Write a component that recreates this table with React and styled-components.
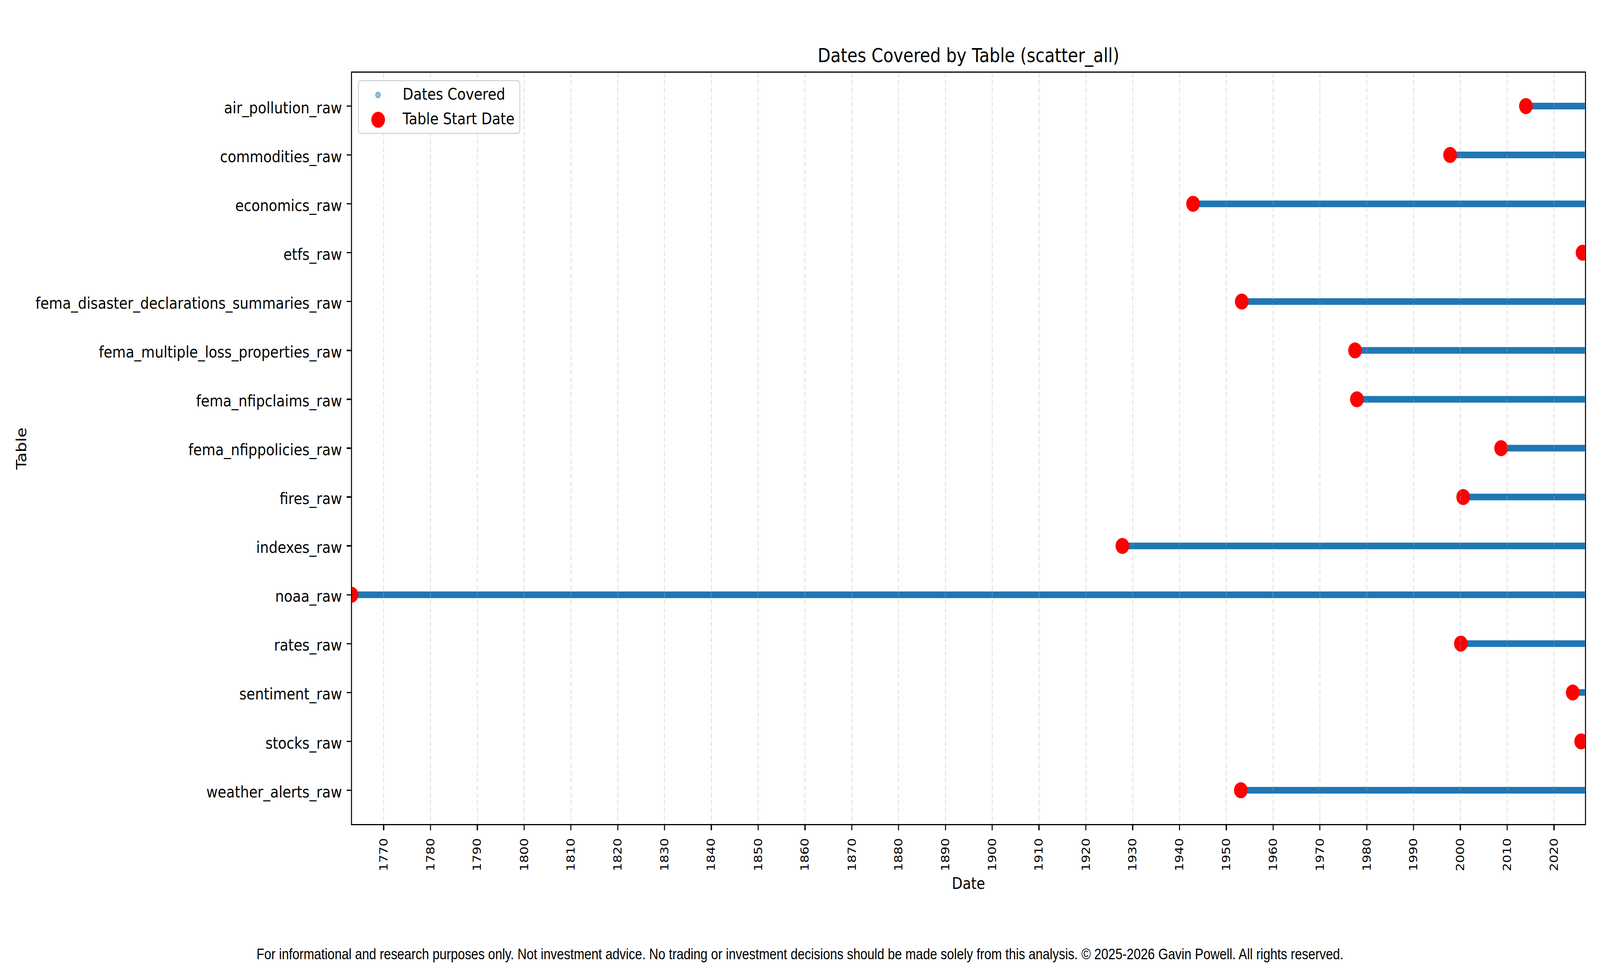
import React, { useEffect, useState } from "react";
import styled, { createGlobalStyle } from "styled-components";

// the figure is laid out on a 4800 x 2480 canvas and stretched to the window
const FIG_W = 4800;
const FIG_H = 2480;

// x scale: px per year measured off the decade ticks
const FIRST_YEAR = 1770;
const PX_PER_YEAR = 14.044;
const FIRST_TICK = 95; // inner plot left -> 1770 tick
const PLOT_W = 3699;
const PLOT_H = 1923;
const ROW0 = 85.5;
const ROW_STEP = 125.07;
const LEFT_EDGE_YEAR = 1763.13;

const tables = [
  { name: "air_pollution_raw", start: 2014.0 },
  { name: "commodities_raw", start: 1997.8 },
  { name: "economics_raw", start: 1942.9 },
  { name: "etfs_raw", start: 2026.1 },
  { name: "fema_disaster_declarations_summaries_raw", start: 1953.3 },
  { name: "fema_multiple_loss_properties_raw", start: 1977.5 },
  { name: "fema_nfipclaims_raw", start: 1977.9 },
  { name: "fema_nfippolicies_raw", start: 2008.7 },
  { name: "fires_raw", start: 2000.6 },
  { name: "indexes_raw", start: 1927.8 },
  { name: "noaa_raw", start: LEFT_EDGE_YEAR },
  { name: "rates_raw", start: 2000.1 },
  { name: "sentiment_raw", start: 2024.0 },
  { name: "stocks_raw", start: 2025.8 },
  { name: "weather_alerts_raw", start: 1953.1 },
];

const decades = Array.from({ length: 26 }, (_, i) => FIRST_YEAR + i * 10);

const xOf = (year) => FIRST_TICK + (year - FIRST_YEAR) * PX_PER_YEAR;
const yOf = (i) => ROW0 + i * ROW_STEP;

const fitScale = () => ({
  x: window.innerWidth / FIG_W,
  y: window.innerHeight / FIG_H,
});

const GlobalStyle = createGlobalStyle`
  html, body {
    margin: 0;
    padding: 0;
    background: #ffffff;
    overflow: hidden;
  }
  body {
    font-family: "DejaVu Sans", sans-serif;
    color: #000;
  }
`;

const Frame = styled.div`
  width: 100vw;
  height: 100vh;
  overflow: hidden;
  background: #ffffff;
`;

const Page = styled.div`
  width: ${FIG_W}px;
  height: ${FIG_H}px;
  display: flex;
  flex-direction: column;
  background: #ffffff;
  transform-origin: 0 0;
`;

const Title = styled.h1`
  margin: 0 0 0 1053px;
  width: 3705px;
  height: 183px;
  box-sizing: border-box;
  padding-top: 117px;
  font: 400 50px/50px "DejaVu Sans", sans-serif;
  text-align: center;
  white-space: nowrap;
`;

const ChartRow = styled.div`
  display: flex;
  height: 1929px;
`;

const YLabelCol = styled.div`
  width: 128px;
  flex: none;
  display: flex;
  align-items: center;
  justify-content: center;
`;

const RotatedText = styled.span`
  writing-mode: vertical-rl;
  transform: rotate(180deg);
  white-space: nowrap;
  font: 400 ${(p) => p.size}px/1 "DejaVu Sans", sans-serif;
`;

const YTicks = styled.div`
  width: 925px;
  flex: none;
  height: 1929px;
  box-sizing: border-box;
  padding: 26px 0 27px;
  display: grid;
  grid-template-columns: minmax(0, 1fr);
  grid-template-rows: repeat(15, 1fr);
`;

const YTickRow = styled.div`
  min-width: 0;
  display: flex;
  align-items: center;
  justify-content: flex-end;
`;

const YTickLabel = styled.span`
  flex: none;
  font: 400 41.67px/1 "DejaVu Sans", sans-serif;
  padding-top: 8px;
  margin-right: 14px;
  white-space: nowrap;
`;

const YTickMark = styled.span`
  flex: none;
  width: 13px;
  height: 3.3px;
  background: #000;
`;

const PlotBox = styled.div`
  position: relative;
  flex: none;
  width: 3705px;
  height: 1929px;
  box-sizing: border-box;
  border: 3.3px solid #000;
  overflow: hidden;
`;

const PlotSvg = styled.svg`
  display: block;
`;

const Legend = styled.div`
  position: absolute;
  left: 18px;
  top: 19px;
  width: 487px;
  height: 138px;
  box-sizing: border-box;
  padding-top: 1px;
  border: 3px solid #d6d6d6;
  border-radius: 9px;
  background: rgba(255, 255, 255, 0.8);
`;

const LegendRow = styled.div`
  display: flex;
  align-items: center;
  height: 63px;
`;

const LegendMarker = styled.span`
  width: 114px;
  display: flex;
  justify-content: center;
  margin-top: 5px;
`;

const Dot = styled.span`
  width: ${(p) => p.size}px;
  height: ${(p) => p.size}px;
  box-sizing: border-box;
  border-radius: 50%;
  background: ${(p) => p.fill};
  border: ${(p) => (p.edge ? `2.5px solid ${p.edge}` : "none")};
`;

const LegendText = styled.span`
  margin-left: 17px;
  font: 400 41.67px/63px "DejaVu Sans", sans-serif;
  white-space: nowrap;
`;

const XTicks = styled.div`
  display: flex;
  margin-left: 1053px;
  padding-left: 27.78px;
  height: 124px;
`;

const XTickCell = styled.div`
  flex: none;
  width: 140.44px;
  display: flex;
  flex-direction: column;
  align-items: center;
`;

const XTickMark = styled.span`
  width: 3.3px;
  height: 13px;
  background: #000;
`;

const XTickLabel = styled(RotatedText)`
  margin-top: 20px;
`;

const XLabel = styled.div`
  margin-left: 1053px;
  width: 3705px;
  height: 50px;
  font: 400 41.67px/50px "DejaVu Sans", sans-serif;
  text-align: center;
`;

const Footer = styled.div`
  margin-top: 135px;
  width: ${FIG_W}px;
  font: 400 38px/42px "Liberation Sans", Arial, sans-serif;
  text-align: center;
  white-space: nowrap;
`;

const Plot = () => (
  <PlotSvg width={PLOT_W} height={PLOT_H} viewBox={`0 0 ${PLOT_W} ${PLOT_H}`}>
    {tables.map((t, i) => (
      <line
        key={t.name}
        x1={xOf(t.start)}
        x2={PLOT_W + 20}
        y1={yOf(i)}
        y2={yOf(i)}
        stroke="#1f77b4"
        strokeWidth="17"
      />
    ))}
    {tables.map((t, i) => (
      <circle key={t.name} cx={xOf(t.start)} cy={yOf(i)} r="20.5" fill="#ff0000" />
    ))}
    {decades.map((y) => (
      <line
        key={y}
        x1={xOf(y)}
        x2={xOf(y)}
        y1="0"
        y2={PLOT_H}
        stroke="#b0b0b0"
        strokeOpacity="0.45"
        strokeWidth="2.2"
        strokeDasharray="13 6"
      />
    ))}
  </PlotSvg>
);

const App = () => {
  const [scale, setScale] = useState(fitScale);

  useEffect(() => {
    const onResize = () => setScale(fitScale());
    window.addEventListener("resize", onResize);
    return () => window.removeEventListener("resize", onResize);
  }, []);

  return (
    <Frame>
      <GlobalStyle />
      <Page style={{ transform: `scale(${scale.x}, ${scale.y})` }}>
        <Title>Dates Covered by Table (scatter_all)</Title>
        <ChartRow>
          <YLabelCol>
            <RotatedText size={41.67}>Table</RotatedText>
          </YLabelCol>
          <YTicks>
            {tables.map((t) => (
              <YTickRow key={t.name}>
                <YTickLabel>{t.name}</YTickLabel>
                <YTickMark />
              </YTickRow>
            ))}
          </YTicks>
          <PlotBox>
            <Plot />
            <Legend>
              <LegendRow>
                <LegendMarker>
                  <Dot size={16} fill="rgba(31,119,180,0.45)" edge="rgba(31,119,180,0.55)" />
                </LegendMarker>
                <LegendText>Dates Covered</LegendText>
              </LegendRow>
              <LegendRow>
                <LegendMarker>
                  <Dot size={41} fill="#ff0000" />
                </LegendMarker>
                <LegendText>Table Start Date</LegendText>
              </LegendRow>
            </Legend>
          </PlotBox>
        </ChartRow>
        <XTicks>
          {decades.map((y) => (
            <XTickCell key={y}>
              <XTickMark />
              <XTickLabel size={33.33}>{y}</XTickLabel>
            </XTickCell>
          ))}
        </XTicks>
        <XLabel>Date</XLabel>
        <Footer>
          For informational and research purposes only. Not investment advice. No trading or
          investment decisions should be made solely from this analysis. © 2025-2026 Gavin Powell.
          All rights reserved.
        </Footer>
      </Page>
    </Frame>
  );
};

export default App;
